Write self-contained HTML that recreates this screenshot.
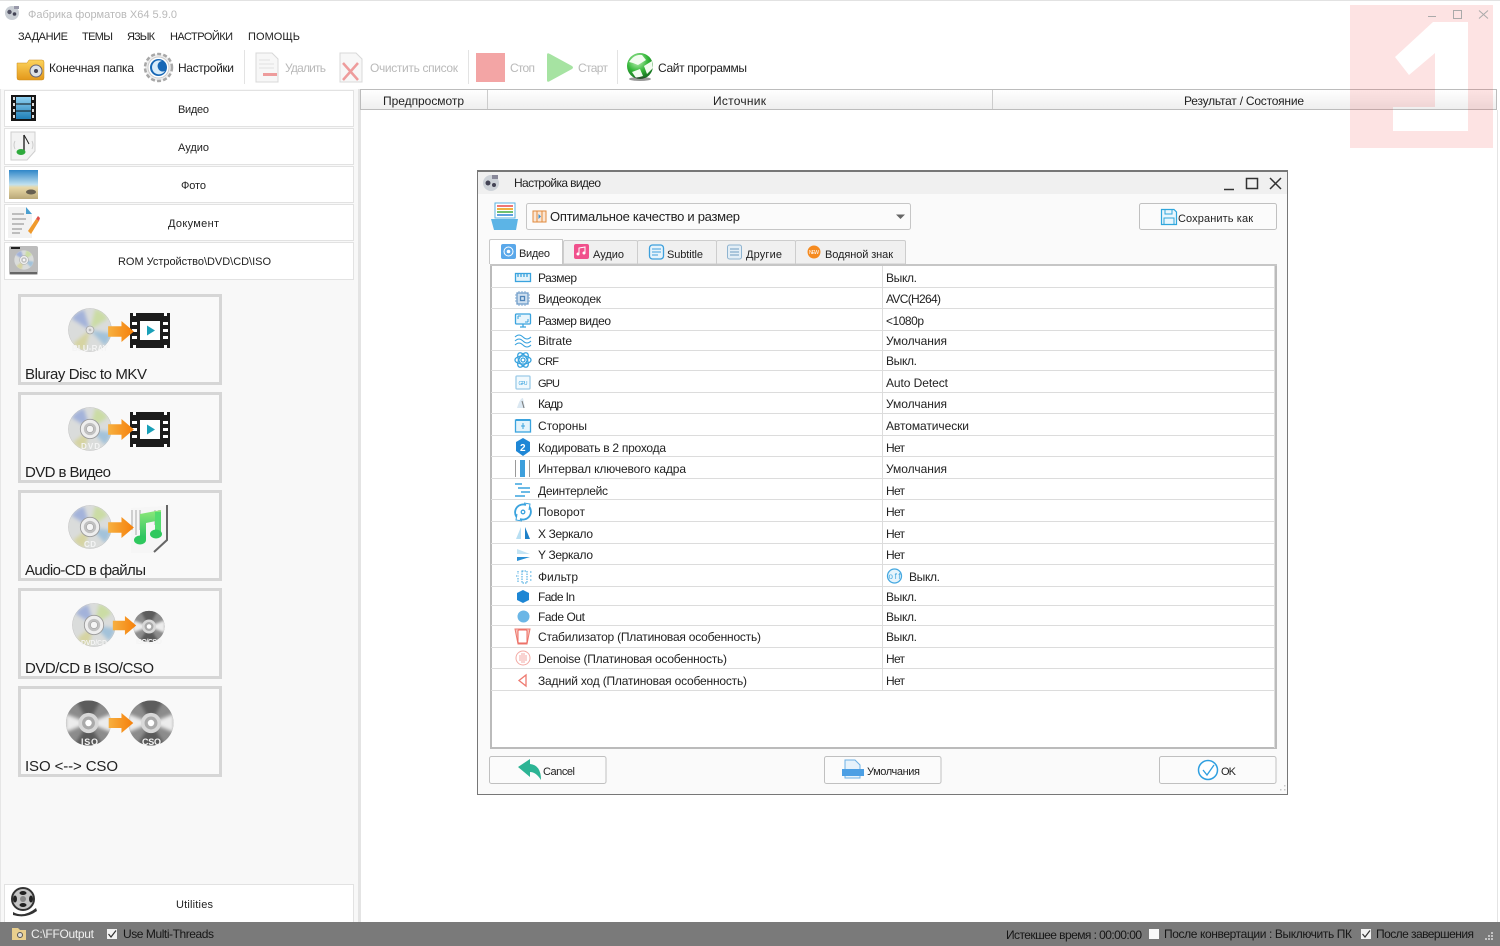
<!DOCTYPE html>
<html lang="ru"><head><meta charset="utf-8"><title>Фабрика форматов</title>
<style>
html,body{margin:0;padding:0;background:#fff;width:1500px;height:946px;overflow:hidden}
svg{display:block;position:absolute;left:0;top:0;filter:blur(.3px)}
text{font-family:"Liberation Sans","DejaVu Sans",sans-serif;font-size:12px;fill:#222;white-space:pre}
.g{fill:#b9b9b9}.h{fill:#222;font-size:11px}.c{font-size:15px;fill:#222}.s{fill:#161616}.k{font-size:11px}
</style></head><body>
<svg width="1500" height="946" viewBox="0 0 1500 946" xmlns="http://www.w3.org/2000/svg">
<defs>
<linearGradient id="hd" x1="0" y1="0" x2="0" y2="1"><stop offset="0" stop-color="#fff"/><stop offset="1" stop-color="#eeeeee"/></linearGradient>
<linearGradient id="or" x1="0" y1="0" x2="1" y2="0"><stop offset="0" stop-color="#f7b040"/><stop offset="1" stop-color="#f57f0a"/></linearGradient>
<linearGradient id="fo" x1="0" y1="0" x2="0" y2="1"><stop offset="0" stop-color="#fcd45c"/><stop offset="1" stop-color="#e3981a"/></linearGradient>
<linearGradient id="ph" x1="0" y1="0" x2="0" y2="1"><stop offset="0" stop-color="#2f86c8"/><stop offset=".5" stop-color="#bfe0ef"/><stop offset=".6" stop-color="#e9d9a8"/><stop offset="1" stop-color="#b9a878"/></linearGradient>
<linearGradient id="fl" x1="0" y1="0" x2="0" y2="1"><stop offset="0" stop-color="#8fd0f0"/><stop offset="1" stop-color="#1f7fb8"/></linearGradient>
<radialGradient id="gl" cx=".4" cy=".3" r=".8"><stop offset="0" stop-color="#c8f5c0"/><stop offset=".5" stop-color="#35b83a"/><stop offset="1" stop-color="#0c5a18"/></radialGradient>
<linearGradient id="mu" x1="0" y1="0" x2="0" y2="1"><stop offset="0" stop-color="#8fe87a"/><stop offset="1" stop-color="#25c060"/></linearGradient>
<filter id="sf" x="-10%" y="-10%" width="120%" height="120%"><feGaussianBlur stdDeviation="4"/></filter>
<clipPath id="dc"><circle cx="50" cy="50" r="49"/></clipPath>
<symbol id="disc" viewBox="0 0 100 100"><circle cx="50" cy="50" r="49" fill="#dadcdb" stroke="#bbb" stroke-width="1"/>
<g clip-path="url(#dc)"><g filter="url(#sf)"><path d="M50 50L8 24A48 48 0 0 1 36 4Z" fill="#a3b2da"/><path d="M50 50L62 2A48 48 0 0 1 90 24Z" fill="#cbdca4"/><path d="M50 50L98 58A48 48 0 0 1 84 86Z" fill="#a3c2da"/><path d="M50 50L38 98A48 48 0 0 1 12 80Z" fill="#d6d4a2"/></g></g>
<circle cx="50" cy="50" r="22" fill="#eee" stroke="#999" stroke-width="2"/><circle cx="50" cy="50" r="14" fill="#c0c0c0"/><circle cx="50" cy="50" r="8" fill="#f5f5f5" stroke="#888"/></symbol>
<symbol id="disc1" viewBox="0 0 100 100"><circle cx="50" cy="50" r="49" fill="#dadcdb" stroke="#bbb" stroke-width="1"/>
<g clip-path="url(#dc)"><g filter="url(#sf)"><path d="M50 50L8 24A48 48 0 0 1 36 4Z" fill="#a3b2da"/><path d="M50 50L62 2A48 48 0 0 1 90 24Z" fill="#cbdca4"/><path d="M50 50L98 58A48 48 0 0 1 84 86Z" fill="#a3c2da"/><path d="M50 50L38 98A48 48 0 0 1 12 80Z" fill="#d6d4a2"/></g></g>
<circle cx="50" cy="50" r="9" fill="#e6e6e6" stroke="#999" stroke-width="1.500"/><circle cx="50" cy="50" r="3" fill="#bbb"/></symbol>
<symbol id="disc2" viewBox="0 0 100 100"><circle cx="50" cy="50" r="49" fill="#8c8c8c"/>
<g clip-path="url(#dc)"><g filter="url(#sf)"><path d="M50 50L0 30V70Z" fill="#ececec"/><path d="M50 50L100 30V70Z" fill="#ececec"/><path d="M50 50L20 -5H80Z" fill="#5c5c5c"/><path d="M50 50L15 105H85Z" fill="#5a5a5a"/></g></g>
<circle cx="50" cy="50" r="22" fill="#d8d8d8"/><circle cx="50" cy="50" r="14" fill="#aaa"/><circle cx="50" cy="50" r="7" fill="#fff"/></symbol>
<symbol id="arr" viewBox="0 0 27 22"><path d="M0 5.500H14V0L27 11L14 22V16.500H0Z" fill="url(#or)"/></symbol>
<symbol id="film" viewBox="0 0 40 35"><path d="M0 0H40V35H0Z" fill="#1c1c1c"/><path d="M10 8H30V27H10Z" fill="#fff"/><path d="M17 12.500V22.500L25 17.500Z" fill="#1aa0b8"/><g fill="#fff"><rect x="3" y="0" width="3" height="3"/><rect x="2" y="9" width="5" height="3"/><rect x="2" y="16" width="5" height="3"/><rect x="2" y="23" width="5" height="3"/><rect x="3" y="32" width="3" height="3"/><rect x="34" y="0" width="3" height="3"/><rect x="33" y="9" width="5" height="3"/><rect x="33" y="16" width="5" height="3"/><rect x="33" y="23" width="5" height="3"/><rect x="34" y="32" width="3" height="3"/></g></symbol>
</defs>

<!-- base -->
<rect width="1500" height="946" fill="#fff"/>
<rect width="1500" height="1" fill="#e2e2e2"/>
<rect x="0" y="89" width="358" height="833" fill="#f8f8f8"/>
<rect x="358" y="89" width="2" height="833" fill="#e4e4e4"/>
<rect x="0" y="89" width="1" height="833" fill="#e6e6e6"/>

<!-- title -->
<g transform="translate(5 5)"><circle cx="7" cy="8" r="7" fill="#c9ced4"/><circle cx="4.500" cy="7" r="2.200" fill="#556"/><circle cx="9.500" cy="9" r="1.800" fill="#445"/><rect x="9" y="1" width="5" height="3" fill="#99a"/></g>
<text x="28" y="18" class="g k" textLength="149">Фабрика форматов X64 5.9.0</text>
<text x="18" y="40" class="h" textLength="50">ЗАДАНИЕ</text>
<text x="82" y="40" class="h" textLength="31">ТЕМЫ</text>
<text x="127" y="40" class="h" textLength="28">ЯЗЫК</text>
<text x="170" y="40" class="h" textLength="63">НАСТРОЙКИ</text>
<text x="248" y="40" class="h" textLength="52">ПОМОЩЬ</text>

<!-- toolbar icons -->
<path d="M17 63H27L29 60H42Q44 60 44 62V78Q44 80 42 80H19Q17 80 17 78Z" fill="url(#fo)" stroke="#c98a1c" stroke-width=".5"/>
<circle cx="36" cy="71" r="6" fill="#dde2e6" stroke="#667"/><circle cx="36" cy="71" r="2" fill="#445"/>
<circle cx="158.500" cy="67.500" r="13.500" fill="#eee" stroke="#a8a8a8" stroke-width="2.500" stroke-dasharray="4 2.200"/>
<circle cx="158.500" cy="67.500" r="10.500" fill="#fff" stroke="#ccc"/>
<circle cx="158.500" cy="67.500" r="8.500" fill="#1767b5"/><path d="M162 61A7 7 0 1 0 165 71A5 5 0 0 1 158 68A5 5 0 0 1 162 61Z" fill="#d8ecfa"/>
<rect x="244" y="50" width="1" height="34" fill="#e3e3e3"/>
<path d="M256 53H272L278 59V82H256Z" fill="#f7f7f7" stroke="#d8d8d8"/><rect x="263" y="73" width="14" height="3" fill="#ee9c9c"/><g stroke="#e2e2e2"><path d="M259 60H270M259 64H274M259 68H274"/></g>
<path d="M340 53H356L362 59V82H340Z" fill="#f7f7f7" stroke="#d8d8d8"/><path d="M343 63L358 80M358 63L343 80" stroke="#ee9c9c" stroke-width="2.500"/>
<rect x="468" y="50" width="1" height="34" fill="#e3e3e3"/>
<rect x="476" y="53" width="29" height="29" fill="#f3a5a5"/>
<path d="M547 55Q547 52 550 54L572 66Q574 67.500 572 69L550 81Q547 83 547 80Z" fill="#a6e3a2"/>
<rect x="617" y="50" width="1" height="34" fill="#e3e3e3"/>
<circle cx="640" cy="66" r="13" fill="url(#gl)"/><path d="M629 62Q634 54 642 55L646 60L638 65L633 63ZM632 72L640 69L643 76L636 78ZM644 66L652 61L653 68L647 74Z" fill="#f2fcf0"/><ellipse cx="640" cy="79" rx="11" ry="2" fill="#333" opacity=".5"/>

<text x="49" y="72" textLength="85">Конечная папка</text>
<text x="178" y="72" textLength="56">Настройки</text>
<text x="285" y="72" class="g" textLength="41">Удалить</text>
<text x="370" y="72" class="g" textLength="88">Очистить список</text>
<text x="510" y="72" class="g" textLength="25">Стоп</text>
<text x="578" y="72" class="g" textLength="30">Старт</text>
<text x="658" y="72" textLength="89">Сайт программы</text>

<!-- sidebar buttons -->
<g fill="#fff" stroke="#e2e2e2">
<rect x="4.500" y="90.500" width="349" height="36"/><rect x="4.500" y="128.500" width="349" height="36"/><rect x="4.500" y="166.500" width="349" height="36"/><rect x="4.500" y="204.500" width="349" height="36"/><rect x="4.500" y="242.500" width="349" height="37"/><rect x="4.500" y="884.500" width="349" height="38"/></g>
<text x="178" y="113" class="k" textLength="31">Видео</text>
<text x="178" y="151" class="k" textLength="31">Аудио</text>
<text x="181" y="189" class="k" textLength="25">Фото</text>
<text x="168" y="227" class="k" textLength="51">Документ</text>
<text x="118" y="265" class="k" textLength="153">ROM Устройство\DVD\CD\ISO</text>
<text x="176" y="908" class="k" textLength="37">Utilities</text>
<!-- sidebar icons -->
<rect x="11" y="95" width="25" height="26" fill="#161616"/><rect x="16" y="97" width="15" height="22" fill="url(#fl)"/><path d="M16 104H31M16 111H31" stroke="#111"/><g fill="#ddd"><rect x="13" y="97" width="2" height="3"/><rect x="13" y="103" width="2" height="3"/><rect x="13" y="109" width="2" height="3"/><rect x="13" y="115" width="2" height="3"/><rect x="32" y="97" width="2" height="3"/><rect x="32" y="103" width="2" height="3"/><rect x="32" y="109" width="2" height="3"/><rect x="32" y="115" width="2" height="3"/></g>
<path d="M11 132H35V151L27 160H11Z" fill="#f3f3f3" stroke="#cfcfcf"/><path d="M15 141Q13 145 15 149M32 141Q34 145 32 149" stroke="#ccc" fill="none"/><path d="M24 135V152" stroke="#333" stroke-width="1.500"/><path d="M24 135Q27 140 29 144" stroke="#222" fill="none"/><ellipse cx="21" cy="152" rx="4.500" ry="3" fill="#2eaa3c"/>
<rect x="9" y="170" width="29" height="29" fill="url(#ph)"/><ellipse cx="31" cy="192" rx="5" ry="2.500" fill="#665f50"/>
<path d="M8 207H26L32 214V238H8Z" fill="#f2f2f2"/><path d="M26 207L32 214H26Z" fill="#4a9fd0"/><path d="M12 214H24M12 219H26M12 224H24M12 229H22M12 233H20" stroke="#888"/><path d="M28 231L36 219L39 221L31 234Z" fill="#f09a2c"/><path d="M36 219L38 216L40 218L39 221Z" fill="#e0504a"/>
<rect x="9" y="246" width="29" height="29" rx="2" fill="#bcbcbc"/><rect x="10" y="272" width="27" height="2" fill="#666"/><rect x="11" y="247" width="9" height="2" fill="#222"/><use href="#disc" x="14" y="250" width="20" height="20"/>
<circle cx="23" cy="899" r="11" fill="#c4c4c4" stroke="#333" stroke-width="2"/><g fill="#222"><ellipse cx="23" cy="893" rx="3.500" ry="2"/><ellipse cx="15" cy="899" rx="2" ry="3.500"/><ellipse cx="31" cy="899" rx="2" ry="3.500"/><ellipse cx="23" cy="905" rx="3.500" ry="2"/></g><circle cx="23" cy="899" r="3" fill="#888"/><path d="M13 912Q24 918 36 908L37 911Q26 919 13 915Z" fill="#333"/>

<!-- cards -->
<g fill="#f9f9f9" stroke="#d6d6d6" stroke-width="3">
<rect x="19.500" y="295.500" width="201" height="88"/><rect x="19.500" y="393.500" width="201" height="88"/><rect x="19.500" y="491.500" width="201" height="88"/><rect x="19.500" y="589.500" width="201" height="88"/><rect x="19.500" y="687.500" width="201" height="88"/></g>
<use href="#disc1" x="68" y="308" width="44" height="44"/><use href="#film" x="130" y="313" width="40" height="35"/><use href="#arr" x="108" y="321" width="26" height="21"/>
<text x="72" y="351" textLength="36" style="font-size:8px;fill:#f4f4f4;font-weight:bold">BLU-RAY</text>
<use href="#disc" x="68" y="407" width="44" height="44"/><use href="#film" x="130" y="412" width="40" height="35"/><use href="#arr" x="108" y="419" width="26" height="21"/>
<text x="81" y="449" textLength="19" style="font-size:8px;fill:#f4f4f4;font-weight:bold">DVD</text>
<use href="#disc" x="68" y="505" width="44" height="44"/>
<path d="M131 508L165 506L170 503V538L154 553H131Z" fill="#f6f6f6"/><path d="M167 505V540L154 552" stroke="#666" stroke-width="2" fill="none"/><path d="M132 510V530M136 510V535M140 510V530M155 510V525M159 510V522" stroke="#cfcfcf" stroke-width="2"/>
<path d="M140 514L161 510V520L146 523V540H140Z" fill="url(#mu)"/><path d="M155 512H161V534H155Z" fill="#52dc6e"/><ellipse cx="140" cy="540" rx="6" ry="4.500" fill="#2fc85e"/><ellipse cx="156" cy="534" rx="6" ry="4.500" fill="#2fc85e"/>
<use href="#arr" x="108" y="517" width="26" height="21"/>
<text x="84" y="547" textLength="12" style="font-size:8px;fill:#f4f4f4;font-weight:bold">CD</text>
<use href="#disc" x="72" y="603" width="44" height="44"/><use href="#disc2" x="133" y="610" width="32" height="33"/><use href="#arr" x="111" y="616" width="27" height="19"/>
<text x="81" y="645" textLength="26" style="font-size:7px;fill:#f4f4f4;font-weight:bold">DVD/CD</text><text x="136" y="644" textLength="26" style="font-size:7px;fill:#f4f4f4;font-weight:bold">ISO/CSO</text>
<use href="#disc2" x="65" y="700" width="47" height="46"/><use href="#disc2" x="128" y="700" width="46" height="46"/><use href="#arr" x="107" y="713" width="28" height="20"/>
<text x="81" y="745" textLength="17" style="font-size:9px;fill:#f4f4f4;font-weight:bold">ISO</text><text x="142" y="745" textLength="19" style="font-size:9px;fill:#f4f4f4;font-weight:bold">CSO</text>
<text x="25" y="379" class="c" textLength="122">Bluray Disc to MKV</text>
<text x="25" y="477" class="c" textLength="86">DVD в Видео</text>
<text x="25" y="575" class="c" textLength="121">Audio-CD в файлы</text>
<text x="25" y="673" class="c" textLength="129">DVD/CD в ISO/CSO</text>
<text x="25" y="771" class="c" textLength="93">ISO &lt;--&gt; CSO</text>

<!-- list header -->
<rect x="360.500" y="89.500" width="1136" height="20" fill="url(#hd)" stroke="#bcbcbc"/>
<rect x="487" y="90" width="1" height="19" fill="#ccc"/><rect x="992" y="90" width="1" height="19" fill="#ccc"/>
<rect x="360" y="110" width="1" height="812" fill="#e4e4e4"/>
<rect x="1497" y="110" width="1" height="812" fill="#e4e4e4"/>
<text x="383" y="105" fill="#111" textLength="81">Предпросмотр</text>
<text x="713" y="105" textLength="53">Источник</text>
<text x="1184" y="105" textLength="120">Результат / Состояние</text>

<!-- watermark -->
<path fill-rule="evenodd" d="M1350 5H1493V148H1350ZM1433 22H1468V131H1393V107H1435V53L1409 75L1395 57Z" fill="#ee2a2a" fill-opacity=".135"/>
<path d="M1428 16.500H1436" stroke="#aaa"/><rect x="1453.500" y="10.500" width="8" height="8" fill="none" stroke="#aaa"/><path d="M1479 10.500L1488 18.500M1488 10.500L1479 18.500" stroke="#aaa"/>

<!-- dialog -->
<rect x="477.500" y="170.500" width="810" height="624" fill="#fafafa" stroke="#777"/>
<rect x="477" y="170" width="811" height="2" fill="#777"/>
<rect x="478" y="172" width="809" height="22" fill="#f0f0f0"/>
<g transform="translate(482 174)"><circle cx="9" cy="9" r="8" fill="#cdd2d8"/><circle cx="6" cy="9" r="2.500" fill="#445"/><circle cx="12" cy="11" r="2" fill="#445"/><rect x="10" y="1" width="6" height="4" fill="#889"/></g>
<text x="514" y="187" textLength="87">Настройка видео</text>
<path d="M1224 189.500H1234" stroke="#333" stroke-width="1.500"/><rect x="1246.500" y="178.500" width="11" height="10" fill="none" stroke="#333" stroke-width="1.500"/><path d="M1270 178L1281 189M1281 178L1270 189" stroke="#333" stroke-width="1.500"/>
<!-- preset icon -->
<path d="M495 203H515V218H495Z" fill="#fff" stroke="#5bb0e0"/><path d="M497 206H513" stroke="#e77" stroke-width="2"/><path d="M497 209H513" stroke="#f0b040" stroke-width="2"/><path d="M497 212H513" stroke="#70c070" stroke-width="2"/><path d="M497 215H513" stroke="#60a0e0" stroke-width="2"/><path d="M491 219H518L516 230H494Z" fill="#5cb4e6"/>
<rect x="526.500" y="203.500" width="384" height="26" rx="2" fill="#fbfbfb" stroke="#c6c6c6"/>
<rect x="533" y="211" width="13" height="11" fill="#fbe6d4" stroke="#e08a3c"/><path d="M537 211V222M542 211V222" stroke="#e08a3c"/><path d="M538.500 214V219L541 216.500Z" fill="#3b8fd0"/>
<text x="550" y="221" style="font-size:13px" textLength="190">Оптимальное качество и размер</text>
<path d="M896 214.500H905L900.500 219Z" fill="#666"/>
<rect x="1139.500" y="203.500" width="137" height="26" rx="2" fill="#fbfbfb" stroke="#c0c0c0"/>
<path d="M1161.500 209.500H1174L1176.500 212V224.500H1161.500Z" fill="#e9f6fd" stroke="#2fa6dc" stroke-width="1.200"/><path d="M1165 209.500V214H1172V209.500M1164 224.500V218H1174V224.500" fill="none" stroke="#2fa6dc"/>
<text x="1178" y="222" class="k" textLength="75">Сохранить как</text>

<!-- tabs -->
<path d="M489.500 264V241Q489.500 239.500 491 239.500H562.500V266" fill="#fff" stroke="#c8c8c8"/>
<g fill="#f0f0f0" stroke="#cdcdcd"><path d="M563.500 264V242Q563.500 240.500 565 240.500H636Q637.500 240.500 637.500 242V264Z"/><path d="M637.500 264V242Q637.500 240.500 639 240.500H715Q716.500 240.500 716.500 242V264Z"/><path d="M716.500 264V242Q716.500 240.500 718 240.500H794Q795.500 240.500 795.500 242V264Z"/><path d="M795.500 264V242Q795.500 240.500 797 240.500H904Q905.500 240.500 905.500 242V264Z"/></g>
<rect x="501" y="244" width="15" height="15" rx="2" fill="#5aa8ea"/><circle cx="508.500" cy="251.500" r="4.500" fill="none" stroke="#fff"/><circle cx="508.500" cy="251.500" r="1.800" fill="#fff"/>
<rect x="574" y="244" width="15" height="15" rx="2" fill="#f0508c"/><path d="M579 254V248L585 247V253" stroke="#fff" fill="none"/><circle cx="578" cy="254" r="1.500" fill="#fff"/><circle cx="584" cy="253" r="1.500" fill="#fff"/>
<rect x="649.500" y="245" width="14" height="14" rx="3" fill="#e6f3fb" stroke="#3d9fdc" stroke-width="1.300"/><path d="M652 249H661M652 252H661M652 255H658" stroke="#3d9fdc"/>
<rect x="727.500" y="245" width="14" height="14" rx="2" fill="#e3eef6" stroke="#8fb4d0"/><path d="M730 249H739M730 252H739M730 255H739" stroke="#6f9cc0"/>
<circle cx="814" cy="252" r="6.500" fill="#f58a1f"/><text x="809" y="254" style="font-size:5px;fill:#fff" textLength="10">NEW</text>
<text x="519" y="257" class="k" textLength="31">Видео</text>
<text x="593" y="258" class="k" textLength="31">Аудио</text>
<text x="667" y="258" class="k" textLength="36">Subtitle</text>
<text x="746" y="258" class="k" textLength="36">Другие</text>
<text x="825" y="258" class="k" textLength="68">Водяной знак</text>

<!-- table -->
<rect x="491" y="265" width="785" height="483" fill="#fff" stroke="#bbb" stroke-width="2"/>
<rect x="490" y="264" width="787" height="2" fill="#c6c6c6"/>
<g fill="#dcdcdc"><rect x="491" y="287" width="783" height="1"/><rect x="491" y="308" width="783" height="1"/><rect x="491" y="330" width="783" height="1"/><rect x="491" y="350" width="783" height="1"/><rect x="491" y="370" width="783" height="1"/><rect x="491" y="392" width="783" height="1"/><rect x="491" y="413" width="783" height="1"/><rect x="491" y="435" width="783" height="1"/><rect x="491" y="456" width="783" height="1"/><rect x="491" y="478" width="783" height="1"/><rect x="491" y="499" width="783" height="1"/><rect x="491" y="521" width="783" height="1"/><rect x="491" y="543" width="783" height="1"/><rect x="491" y="564" width="783" height="1"/><rect x="491" y="586" width="783" height="1"/><rect x="491" y="605" width="783" height="1"/><rect x="491" y="625" width="783" height="1"/><rect x="491" y="647" width="783" height="1"/><rect x="491" y="668" width="783" height="1"/><rect x="491" y="690" width="783" height="1"/><rect x="882" y="266" width="1" height="424"/><rect x="1274" y="266" width="1" height="482"/></g>

<!-- row icons -->
<g fill="none" stroke="#3aa3de" stroke-width="1.300">
<rect x="515.500" y="273.500" width="15" height="8" fill="#e3f3fb"/><path d="M518 274V277M521 274V277M524 274V277M527 274V277"/>
<rect x="517" y="293" width="11" height="11" stroke="#6f9cc8" fill="#cfe0f0"/><rect x="520.500" y="296.500" width="4" height="4" stroke="#4f84b8"/><path d="M515 295H517M515 298H517M515 301H517M528 295H530M528 298H530M528 301H530M519 291V293M522 291V293M525 291V293M519 304V306M522 304V306M525 304V306" stroke="#7fa8d0" stroke-width="1"/>
<rect x="515.500" y="314" width="15" height="10" rx="1" fill="#e8f5fc"/><path d="M520 327H526M523 324V327"/><path d="M518 316L521 316M518 316V319M528 322H525M528 322V319" stroke-width="1"/>
<path d="M515 337Q519 333 523 337T531 337M515 341Q519 337 523 341T531 341M515 345Q519 341 523 345T531 345" stroke-width="1"/>
<ellipse cx="523" cy="360" rx="8" ry="4"/><ellipse cx="523" cy="360" rx="8" ry="4" transform="rotate(60 523 360)"/><ellipse cx="523" cy="360" rx="8" ry="4" transform="rotate(120 523 360)"/><circle cx="523" cy="360" r="2"/>
<rect x="516" y="376" width="14" height="13" rx="1" stroke="#9ccbe8" fill="#f1f9fd"/>
<rect x="515.500" y="420" width="15" height="12" fill="#e3f3fb"/><path d="M516 420H530" stroke-width="2"/><path d="M523 423V429M521 426H525" stroke-width="1"/>
<path d="M515 484H522M518 488H530M521 492H530M515 496H525" stroke-width="1.500"/>
<path d="M516.500 517A8 8 0 0 1 526 505M529.500 507A8 8 0 0 1 520 519" stroke-width="1.800"/><path d="M524 503L530 504L529 510M522 521L516 520L517 514" stroke-width="1"/><circle cx="523" cy="512" r="1.800"/>
<path d="M518 571V574M518 578V582M516 576H519M522 571H527V583H522ZM530 572H532M530 576H532M530 580H532" stroke-width="1" stroke-dasharray="1.500 1"/>
</g>
<text x="518.500" y="385" textLength="9" style="font-size:5px;fill:#3aa3de">GPU</text>
<path d="M517 408Q520 398 523 398L525 408Z" fill="#dbe8f2"/><path d="M522 401L524 408" stroke="#777"/>
<path d="M523 438L530 442V451L523 456L516 451V442Z" fill="#1f87d6"/><text x="520" y="451" style="font-size:10px;font-weight:bold;fill:#fff">2</text>
<path d="M515.500 460V477M529.500 460V477" stroke="#9a9a9a"/><rect x="520" y="460" width="5" height="17" fill="#3d9fdc"/>
<path d="M521 527V539H516Z" fill="#b8dff3"/><path d="M525 527V539H530Z" fill="#1d80c8"/>
<path d="M517 549L530 554H517Z" fill="#c4e4f4"/><path d="M517 557H530L517 561Z" fill="#2a8fd4"/>
<path d="M523 590L529 593V600L523 603L517 600V593Z" fill="#1d86d4"/>
<circle cx="523.500" cy="616.500" r="6" fill="#6bb6e6"/>
<path d="M515 629H530L527 644H518Z" fill="#f8c4bd" stroke="#ec7a70"/><rect x="518" y="630" width="9" height="13" rx="1" fill="#fff" stroke="#ee6a60"/>
<circle cx="523" cy="658" r="7" fill="#fff" stroke="#f3aaa4"/><path d="M520 655V661M522 653V663M524 653V663M526 655V661" stroke="#f3aaa4"/>
<path d="M526 675V686L519 680.500Z" fill="#fff" stroke="#ee7a70" stroke-width="1.300"/>

<!-- row labels -->
<text x="538" y="282" textLength="39">Размер</text>
<text x="538" y="303" textLength="63">Видеокодек</text>
<text x="538" y="325" textLength="73">Размер видео</text>
<text x="538" y="345" textLength="34">Bitrate</text>
<text x="538" y="365" class="k" textLength="21">CRF</text>
<text x="538" y="387" class="k" textLength="22">GPU</text>
<text x="538" y="408" textLength="25">Кадр</text>
<text x="538" y="430" textLength="49">Стороны</text>
<text x="538" y="452" textLength="128">Кодировать в 2 прохода</text>
<text x="538" y="473" textLength="148">Интервал ключевого кадра</text>
<text x="538" y="495" textLength="70">Деинтерлейс</text>
<text x="538" y="516" textLength="47">Поворот</text>
<text x="538" y="538" textLength="55">X Зеркало</text>
<text x="538" y="559" textLength="55">Y Зеркало</text>
<text x="538" y="581" textLength="40">Фильтр</text>
<text x="538" y="601" textLength="37">Fade In</text>
<text x="538" y="621" textLength="47">Fade Out</text>
<text x="538" y="641" textLength="223">Стабилизатор (Платиновая особенность)</text>
<text x="538" y="663" textLength="189">Denoise (Платиновая особенность)</text>
<text x="538" y="685" textLength="209">Задний ход (Платиновая особенность)</text>
<!-- values -->
<text x="886" y="282" textLength="31">Выкл.</text>
<text x="886" y="303" textLength="55">AVC(H264)</text>
<text x="886" y="325" textLength="38">&lt;1080p</text>
<text x="886" y="345" textLength="61">Умолчания</text>
<text x="886" y="365" textLength="31">Выкл.</text>
<text x="886" y="387" textLength="62">Auto Detect</text>
<text x="886" y="408" textLength="61">Умолчания</text>
<text x="886" y="430" textLength="83">Автоматически</text>
<text x="886" y="452" textLength="19">Нет</text>
<text x="886" y="473" textLength="61">Умолчания</text>
<text x="886" y="495" textLength="19">Нет</text>
<text x="886" y="516" textLength="19">Нет</text>
<text x="886" y="538" textLength="19">Нет</text>
<text x="886" y="559" textLength="19">Нет</text>
<circle cx="894.500" cy="576" r="7" fill="#e6f4fc" stroke="#45a8e0" stroke-width="1.300"/><text x="888.500" y="579" style="font-size:8px;fill:#45a8e0" textLength="12">off</text>
<text x="909" y="581" textLength="31">Выкл.</text>
<text x="886" y="601" textLength="31">Выкл.</text>
<text x="886" y="621" textLength="31">Выкл.</text>
<text x="886" y="641" textLength="31">Выкл.</text>
<text x="886" y="663" textLength="19">Нет</text>
<text x="886" y="685" textLength="19">Нет</text>

<!-- buttons -->
<g fill="#fbfbfb" stroke="#c0c0c0"><rect x="489.500" y="756.500" width="116.500" height="27" rx="2"/><rect x="824.500" y="756.500" width="116.500" height="27" rx="2"/><rect x="1159.500" y="756.500" width="116.500" height="27" rx="2"/></g>
<path d="M518 767L530 759V764Q541 765 541 780Q536 772 530 772V777Z" fill="#2cb494"/>
<path d="M845 760H855L860 765V778H845Z" fill="#e6f2fb" stroke="#6cb0e4"/><rect x="842" y="769" width="22" height="7" fill="#4c9fe4"/>
<circle cx="1208" cy="770" r="9.500" fill="#fff" stroke="#2f9fe0" stroke-width="1.500"/><path d="M1203 770L1207 775L1214 765" fill="none" stroke="#2f9fe0" stroke-width="1.300"/>
<text x="543" y="775" class="k" textLength="32">Cancel</text>
<text x="867" y="775" class="k" textLength="53">Умолчания</text>
<text x="1221" y="775" class="k" textLength="15">OK</text>
<g fill="#c8c8c8"><rect x="1284" y="785" width="1.500" height="1.500"/><rect x="1284" y="789" width="1.500" height="1.500"/><rect x="1280" y="789" width="1.500" height="1.500"/></g>

<!-- status bar -->
<rect x="0" y="922" width="1500" height="24" fill="#7a7a7a"/>
<path d="M12 928H18L20 930H26V940H12Z" fill="#e9cf8e"/><circle cx="20" cy="935" r="2.500" fill="#ddd" stroke="#555"/>
<text x="31" y="938" style="fill:#f0f0f0" textLength="63">C:\FFOutput</text>
<rect x="107" y="929" width="10" height="10" fill="#f2f2f2"/><path d="M108.500 934L111 937L116 930.500" stroke="#333" fill="none" stroke-width="1.200"/>
<text x="123" y="938" class="s" textLength="91">Use Multi-Threads</text>
<text x="1006" y="939" class="s" textLength="136">Истекшее время : 00:00:00</text>
<rect x="1149" y="929" width="10" height="10" fill="#f8f8f8"/>
<text x="1164" y="938" class="s" textLength="188">После конвертации : Выключить ПК</text>
<rect x="1361" y="929" width="10" height="10" fill="#f2f2f2"/><path d="M1362.500 934L1365 937L1370 930.500" stroke="#333" fill="none" stroke-width="1.200"/>
<text x="1376" y="938" class="s" textLength="98">После завершения</text>
<g fill="#c4c4c4"><rect x="1491" y="932" width="2" height="2"/><rect x="1488" y="935" width="2" height="2"/><rect x="1491" y="935" width="2" height="2"/><rect x="1485" y="938" width="2" height="2"/><rect x="1488" y="938" width="2" height="2"/><rect x="1491" y="938" width="2" height="2"/></g>
</svg>
</body></html>
